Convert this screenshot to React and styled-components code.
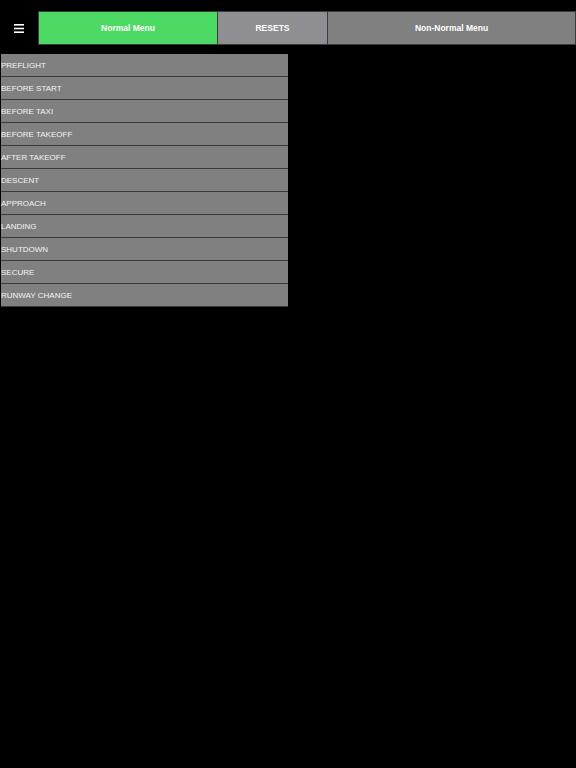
import React from "react";
import styled, { createGlobalStyle } from "styled-components";

const GlobalStyle = createGlobalStyle`
  html, body {
    margin: 0;
    padding: 0;
    background: #000;
    font-family: "Liberation Sans", Arial, sans-serif;
  }
  #root {
    min-height: 768px;
    background: #000;
  }
`;

const Page = styled.div`
  width: 576px;
  min-height: 768px;
  background: #000;
  padding-top: 11px;
  box-sizing: border-box;
`;

const TopBar = styled.div`
  display: grid;
  grid-template-columns: 38px 180px 110px 1fr;
  height: 34px;
`;

const MenuButton = styled.button`
  display: flex;
  align-items: center;
  justify-content: center;
  padding: 0;
  margin-left: -1px;
  background: transparent;
  border: none;
  cursor: pointer;
`;

const Tab = styled.button`
  display: flex;
  align-items: center;
  justify-content: center;
  background: ${(props) => props.bg};
  border: 1px solid #3c3c3c;
  border-left-width: ${(props) => (props.first ? "1px" : "0")};
  color: #fff;
  font-family: "Liberation Sans", Arial, sans-serif;
  font-weight: bold;
  font-size: 8.5px;
  padding: 0;
  cursor: pointer;
`;

const List = styled.div`
  width: 287px;
  margin: 9px 0 0 1px;
  display: flex;
  flex-direction: column;
`;

const Row = styled.div`
  height: 22px;
  display: flex;
  align-items: center;
  background: #808080;
  border-bottom: 1px solid #3a3a3a;
  color: #f4f4f4;
  font-size: 8px;
  padding-left: 0;
`;

const items = [
  "PREFLIGHT",
  "BEFORE START",
  "BEFORE TAXI",
  "BEFORE TAKEOFF",
  "AFTER TAKEOFF",
  "DESCENT",
  "APPROACH",
  "LANDING",
  "SHUTDOWN",
  "SECURE",
  "RUNWAY CHANGE",
];

function Hamburger() {
  return (
    <svg width="10" height="9" viewBox="0 0 10 9">
      <rect x="0" y="0" width="10" height="1.6" fill="#fff" />
      <rect x="0" y="3.7" width="10" height="1.6" fill="#fff" />
      <rect x="0" y="7.4" width="10" height="1.6" fill="#fff" />
    </svg>
  );
}

export default function App() {
  return (
    <Page>
      <GlobalStyle />
      <TopBar>
        <MenuButton>
          <Hamburger />
        </MenuButton>
        <Tab bg="#4cd964" first>
          Normal Menu
        </Tab>
        <Tab bg="#8e8e93">RESETS</Tab>
        <Tab bg="#808080">Non-Normal Menu</Tab>
      </TopBar>
      <List>
        {items.map((item) => (
          <Row key={item}>{item}</Row>
        ))}
      </List>
    </Page>
  );
}
